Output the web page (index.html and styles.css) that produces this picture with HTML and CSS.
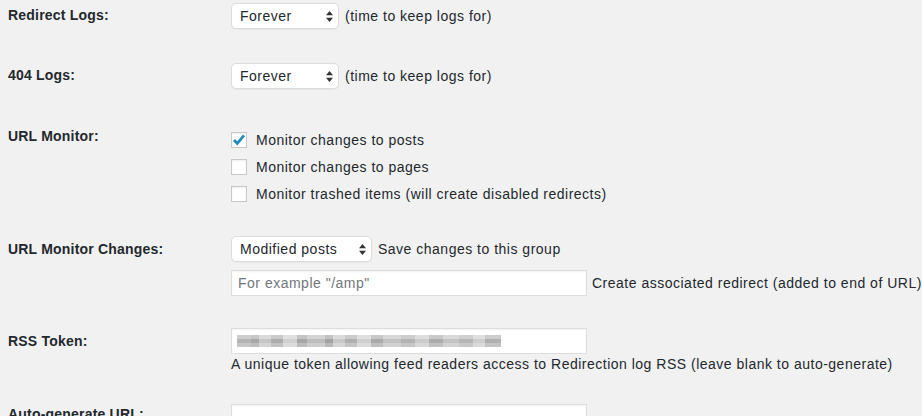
FILE: index.html
```html
<!DOCTYPE html>
<html lang="en">
<head>
    <meta charset="UTF-8">
    <meta name="viewport" content="width=device-width, initial-scale=1.0">
    <title>Redirection Options</title>
    <link rel="stylesheet" href="styles.css">
</head>
<body>
    <div class="form-table">
        <div class="row row-logs">
            <div class="label">Redirect Logs:</div>
            <div class="field">
                <div class="line">
                    <span class="select-wrap">
                        <select class="select-short">
                            <option>Forever</option>
                        </select>
                        <svg class="arrows" width="7" height="11" viewBox="0 0 7 11"><path d="M3.5 0 L7 4.2 L0 4.2 Z M3.5 11 L7 6.8 L0 6.8 Z" fill="#333"/></svg>
                    </span>
                    <span>(time to keep logs for)</span>
                </div>
            </div>
        </div>

        <div class="row row-404">
            <div class="label">404 Logs:</div>
            <div class="field">
                <div class="line">
                    <span class="select-wrap">
                        <select class="select-short">
                            <option>Forever</option>
                        </select>
                        <svg class="arrows" width="7" height="11" viewBox="0 0 7 11"><path d="M3.5 0 L7 4.2 L0 4.2 Z M3.5 11 L7 6.8 L0 6.8 Z" fill="#333"/></svg>
                    </span>
                    <span>(time to keep logs for)</span>
                </div>
            </div>
        </div>

        <div class="row row-monitor">
            <div class="label">URL Monitor:</div>
            <div class="field">
                <label class="check-line">
                    <span class="box">
                        <svg width="16" height="16" viewBox="0 0 16 16"><path d="M3 8 L6.3 11.4 L13 3.4" fill="none" stroke="#1e8cbe" stroke-width="2.8"/></svg>
                    </span>
                    Monitor changes to posts
                </label>
                <label class="check-line">
                    <span class="box"></span>
                    Monitor changes to pages
                </label>
                <label class="check-line">
                    <span class="box"></span>
                    Monitor trashed items (will create disabled redirects)
                </label>
            </div>
        </div>

        <div class="row row-changes">
            <div class="label">URL Monitor Changes:</div>
            <div class="field">
                <div class="line">
                    <span class="select-wrap">
                        <select class="select-wide">
                            <option>Modified posts</option>
                        </select>
                        <svg class="arrows" width="7" height="11" viewBox="0 0 7 11"><path d="M3.5 0 L7 4.2 L0 4.2 Z M3.5 11 L7 6.8 L0 6.8 Z" fill="#333"/></svg>
                    </span>
                    <span>Save changes to this group</span>
                </div>
                <div class="line line-input">
                    <input type="text" class="text-input" placeholder="For example &quot;/amp&quot;">
                    <span class="nowrap">Create associated redirect (added to end of URL)</span>
                </div>
            </div>
        </div>

        <div class="row row-token">
            <div class="label">RSS Token:</div>
            <div class="field">
                <div class="token-input">
                    <span class="blurred"></span>
                </div>
                <p class="description">A unique token allowing feed readers access to Redirection log RSS (leave blank to auto-generate)</p>
            </div>
        </div>

        <div class="row row-auto">
            <div class="label">Auto-generate URL:</div>
            <div class="field">
                <input type="text" class="text-input">
            </div>
        </div>
    </div>
</body>
</html>
```

FILE: styles.css
```css
body {
    margin: 0 0 0 8px;
    background-color: #f1f1f1;
    color: #23282d;
    font-family: "Liberation Sans", Arial, sans-serif;
    font-size: 14px;
    line-height: 20px;
    letter-spacing: 0.5px;
    overflow: hidden;
}
.form-table {
    display: flex;
    flex-direction: column;
}
.row {
    display: grid;
    grid-template-columns: 223px 1fr;
}
.label {
    font-weight: bold;
    letter-spacing: 0.2px;
    white-space: nowrap;
}
.line {
    display: flex;
    align-items: center;
    gap: 6px;
}
.nowrap {
    white-space: nowrap;
}
.row-logs {
    padding-top: 3px;
    padding-bottom: 34px;
}
.row-logs .label,
.row-404 .label {
    padding-top: 2px;
}
.row-404 {
    padding-bottom: 37px;
}
.row-monitor {
    padding-bottom: 29px;
}
.row-changes .label {
    padding-top: 3px;
}
.row-changes {
    padding-bottom: 32px;
}
.line-input {
    margin-top: 8px;
    gap: 5px;
}
.row-token .label {
    padding-top: 3px;
}
.row-token {
    padding-bottom: 30px;
}
.select-wrap {
    position: relative;
    display: inline-block;
    height: 26px;
}
select {
    appearance: none;
    -webkit-appearance: none;
    height: 26px;
    margin: 0;
    padding: 0 8px;
    border: 1px solid #dcdcdc;
    border-radius: 5px;
    background: #fff;
    color: #23282d;
    font-family: inherit;
    font-size: 14px;
    letter-spacing: 0.5px;
    box-shadow: 0 1px 1px rgba(0, 0, 0, 0.04);
}
.select-short {
    width: 108px;
}
.select-wide {
    width: 141px;
}
.arrows {
    position: absolute;
    right: 6px;
    top: 8px;
    pointer-events: none;
}
.check-line {
    display: flex;
    align-items: center;
    height: 27px;
    gap: 9px;
}
.box {
    width: 14px;
    height: 14px;
    border: 1px solid #c8c8c8;
    background: #fff;
    box-shadow: inset 0 1px 2px rgba(0, 0, 0, 0.07);
    display: flex;
    align-items: center;
    justify-content: center;
    flex: none;
}
.box svg {
    flex: none;
}
.text-input,
.token-input {
    box-sizing: border-box;
    width: 356px;
    height: 26px;
    margin: 0;
    padding: 0 6px;
    border: 1px solid #dddddd;
    background: #fff;
    color: #23282d;
    font-family: inherit;
    font-size: 14px;
    letter-spacing: 0.5px;
    box-shadow: inset 0 1px 2px rgba(0, 0, 0, 0.05);
    flex: none;
}
.text-input::placeholder {
    color: #72777c;
}
.token-input {
    display: flex;
    align-items: center;
    padding-left: 5px;
}
.blurred {
    display: block;
    width: 264px;
    height: 12px;
    background:
        linear-gradient(180deg, rgba(255, 255, 255, 0.35) 0 4px, transparent 4px 8px, rgba(255, 255, 255, 0.25) 8px 12px),
        linear-gradient(90deg,
            #b4b4b4 0 14px, #a8a8a8 14px 22px, #c6c6c6 22px 34px, #adadad 34px 46px,
            #d0d0d0 46px 60px, #a6a6a6 60px 70px, #bdbdbd 70px 88px, #a2a2a2 88px 96px,
            #c8c8c8 96px 108px, #b0b0b0 108px 120px, #cfcfcf 120px 134px, #aaaaaa 134px 146px,
            #c2c2c2 146px 164px, #b3b3b3 164px 178px, #cbcbcb 178px 192px, #acacac 192px 206px,
            #c4c4c4 206px 222px, #b6b6b6 222px 236px, #cecece 236px 248px, #b0b0b0 248px 264px);
    filter: blur(0.5px);
}
.description {
    margin: 0;
    height: 20px;
    white-space: nowrap;
}
```
